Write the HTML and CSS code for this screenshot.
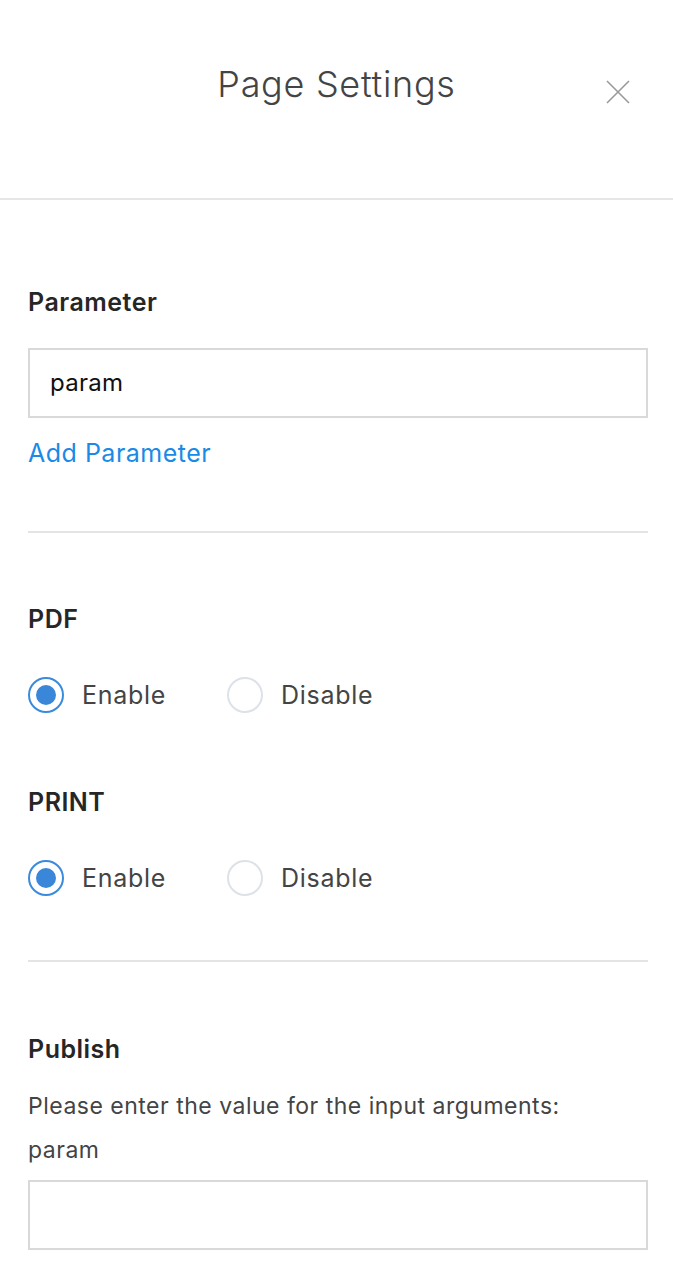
FILE: index.html
```html
<!DOCTYPE html>
<html lang="en">
<head>
    <meta charset="UTF-8">
    <meta name="viewport" content="width=device-width, initial-scale=1.0">
    <title>Page Settings</title>
    <link rel="stylesheet" href="styles.css">
</head>
<body>
    <div class="panel">
        <!-- Cabeçalho -->
        <div class="panel-header">
            <span></span>
            <h1>Page Settings</h1>
            <button class="close" aria-label="Close">
                <svg width="24" height="24" viewBox="0 0 24 24">
                    <path d="M1 1 L23 23 M23 1 L1 23" stroke="#9a9a9a" stroke-width="1.6" fill="none"/>
                </svg>
            </button>
        </div>

        <div class="panel-body">
            <!-- Parâmetros -->
            <div class="section section-param">
                <div class="label">Parameter</div>
                <div class="field">param</div>
                <a href="#" class="add-link">Add Parameter</a>
            </div>

            <!-- PDF / PRINT -->
            <div class="section section-options">
                <div class="label">PDF</div>
                <div class="radio-row">
                    <label class="radio checked"><span class="dot"></span>Enable</label>
                    <label class="radio"><span class="dot"></span>Disable</label>
                </div>

                <div class="label label-print">PRINT</div>
                <div class="radio-row">
                    <label class="radio checked"><span class="dot"></span>Enable</label>
                    <label class="radio"><span class="dot"></span>Disable</label>
                </div>
            </div>

            <!-- Publicar -->
            <div class="section section-publish">
                <div class="label">Publish</div>
                <p class="hint">Please enter the value for the input arguments:</p>
                <p class="hint hint-name">param</p>
                <div class="field"></div>
            </div>
        </div>
    </div>
</body>
</html>
```

FILE: styles.css
```css
/* Corpo */
body {
    font-family: Inter, Lato, sans-serif;
    background-color: #fff;
    color: #444;
    margin: 0;
    padding: 0;
}

/* Cabeçalho */
.panel-header {
    display: grid;
    grid-template-columns: 1fr auto 1fr;
    height: 200px;
    border-bottom: 2px solid #e6e6e6;
    box-sizing: border-box;
}

.panel-header h1 {
    margin: 60px 0 0;
    font-size: 36px;
    line-height: 48px;
    font-weight: 300;
    letter-spacing: 0.7px;
    color: #444;
}

.close {
    justify-self: end;
    align-self: start;
    margin: 80px 43px 0 0;
    padding: 0;
    border: none;
    background: none;
    cursor: pointer;
    width: 24px;
    height: 24px;
}

.close svg {
    display: block;
}

/* Conteúdo */
.panel-body {
    padding: 0 25px 0 28px;
}

.section {
    border-bottom: 2px solid #e4e4e4;
}

.section:last-child {
    border-bottom: none;
}

.label {
    font-size: 25px;
    line-height: 30px;
    font-weight: 600;
    letter-spacing: 0.5px;
    color: #262626;
}

/* Campo de texto */
.field {
    height: 70px;
    box-sizing: border-box;
    border: 2px solid #d9d9d9;
    padding: 0 20px;
    font-size: 24px;
    line-height: 66px;
    letter-spacing: 0.3px;
    color: #111;
}

.section-param {
    padding: 87px 0 63px;
}

.section-param .field {
    margin-top: 31px;
}

.add-link {
    display: block;
    margin-top: 20px;
    font-size: 25px;
    line-height: 30px;
    letter-spacing: 0.5px;
    color: #1a8ae6;
    text-decoration: none;
}

/* Opções de rádio */
.section-options {
    padding: 71px 0 64px;
}

.label-print {
    margin-top: 74px;
}

.radio-row {
    display: flex;
    margin-top: 43px;
}

.radio {
    display: flex;
    align-items: center;
    font-size: 25px;
    letter-spacing: 0.7px;
    color: #444;
    width: 199px;
}

.dot {
    width: 36px;
    height: 36px;
    box-sizing: border-box;
    border: 2px solid #dde2e8;
    border-radius: 50%;
    margin-right: 18px;
    display: flex;
    align-items: center;
    justify-content: center;
}

.radio.checked .dot {
    border-color: #3a8bdc;
}

.radio.checked .dot::after {
    content: "";
    width: 20px;
    height: 20px;
    border-radius: 50%;
    background-color: #3a87d9;
}

/* Publicar */
.section-publish {
    padding: 72px 0 40px;
}

.hint {
    margin: 27px 0 0;
    font-size: 23px;
    line-height: 30px;
    letter-spacing: 0.5px;
    color: #444;
}

.hint-name {
    margin-top: 14px;
}

.section-publish .field {
    margin-top: 15px;
}
```
